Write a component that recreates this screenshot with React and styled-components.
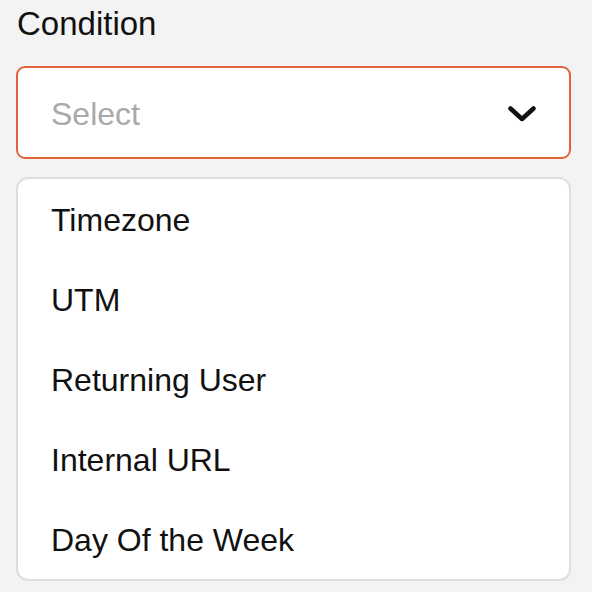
import styled, { createGlobalStyle } from 'styled-components'

const GlobalStyle = createGlobalStyle`
  html, body {
    margin: 0;
    padding: 0;
    background: #f3f3f3;
  }
  body {
    font-family: "Liberation Sans", Arial, sans-serif;
    color: #111;
  }
`

const Page = styled.div`
  width: 592px;
  height: 592px;
  box-sizing: border-box;
  padding: 0 21px 0 16px;
  background: #f3f3f3;
  overflow: hidden;
`

const Label = styled.div`
  font-size: 33px;
  line-height: 48px;
  padding-left: 1px;
  margin-bottom: 18px;
  color: #111;
`

const SelectBox = styled.div`
  height: 93px;
  box-sizing: border-box;
  border: 2px solid #e0633a;
  border-radius: 9px;
  background: #fff;
  display: flex;
  align-items: center;
  justify-content: space-between;
  padding: 3px 32px 0 33px;
`

const Placeholder = styled.span`
  font-size: 32px;
  color: #a9a9a9;
`

const Menu = styled.ul`
  list-style: none;
  margin: 18px 0 0;
  padding: 0;
  background: #fff;
  border: 2px solid #dedede;
  border-radius: 12px;
`

const Item = styled.li`
  height: 80px;
  box-sizing: border-box;
  display: flex;
  align-items: center;
  padding: 3px 0 0 33px;
  font-size: 32px;
  color: #111;
`

const options = ['Timezone', 'UTM', 'Returning User', 'Internal URL', 'Day Of the Week']

function Chevron() {
  return (
    <svg width="30" height="18" viewBox="0 0 30 18">
      <polyline
        points="3.5,3.5 15,14 26.5,3.5"
        fill="none"
        stroke="#111"
        strokeWidth="4.5"
        strokeLinecap="round"
        strokeLinejoin="round"
      />
    </svg>
  )
}

export default function App() {
  return (
    <Page>
      <GlobalStyle />
      <Label>Condition</Label>
      <SelectBox>
        <Placeholder>Select</Placeholder>
        <Chevron />
      </SelectBox>
      <Menu>
        {options.map((o) => (
          <Item key={o}>{o}</Item>
        ))}
      </Menu>
    </Page>
  )
}
